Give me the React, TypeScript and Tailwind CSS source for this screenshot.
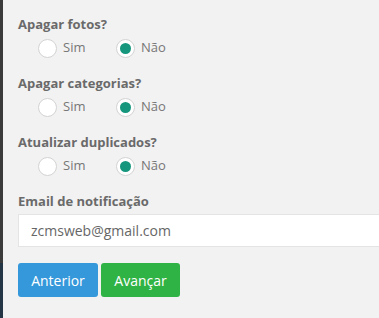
import React from 'react';

const font = { fontFamily: '"Open Sans", "Liberation Sans", sans-serif' };

type RadioProps = { label: string; checked?: boolean; className?: string };

const Radio: React.FC<RadioProps> = ({ label, checked, className = '' }) => (
  <label className={`flex items-center h-[22px] ${className}`}>
    <span className="w-[19px] h-[19px] rounded-full border border-[#d3d3d3] bg-white flex items-center justify-center">
      {checked && <span className="w-[11px] h-[11px] rounded-full bg-[#16977d]"></span>}
    </span>
    <span className="ml-[6px] text-[13px] text-[#777]">{label}</span>
  </label>
);

const groups = [
  { title: 'Apagar fotos?' },
  { title: 'Apagar categorias?' },
  { title: 'Atualizar duplicados?' },
];

export default function App() {
  return (
    <div className="flex w-[379px] h-[318px] overflow-hidden bg-[#f2f2f2]" style={font}>
      {/* left sidebar edge */}
      <div className="flex flex-col w-[3px] shrink-0">
        <div className="h-[263px] bg-[#3b3b3b]"></div>
        <div className="flex-1 bg-[#243645]"></div>
      </div>

      <div className="flex-1 pl-[15px] pt-[15px]">
        {groups.map((g) => (
          <div key={g.title} className="mb-[15px]">
            <div className="h-[18px] leading-[18px] text-[13px] font-bold text-[#6a6a6a] mb-[4px]">{g.title}</div>
            <div className="flex pl-[20px]">
              <Radio label="Sim" className="w-[78px]" />
              <Radio label="Não" checked />
            </div>
          </div>
        ))}

        <div className="h-[18px] leading-[18px] text-[13px] font-bold text-[#6a6a6a] mb-[4px]">Email de notificação</div>
        <div className="w-[400px] h-[33px] bg-white border border-[#e4e4e4] flex items-center pl-[12px] text-[14px] text-[#666] mb-[16px]">
          zcmsweb@gmail.com
        </div>

        <div className="flex gap-[3px]">
          <button className="w-[80px] h-[34px] rounded-[3px] bg-[#3498db] text-white text-[14px]">Anterior</button>
          <button className="w-[79px] h-[34px] rounded-[3px] bg-[#2fb344] text-white text-[14px]">Avançar</button>
        </div>
      </div>
    </div>
  );
}
